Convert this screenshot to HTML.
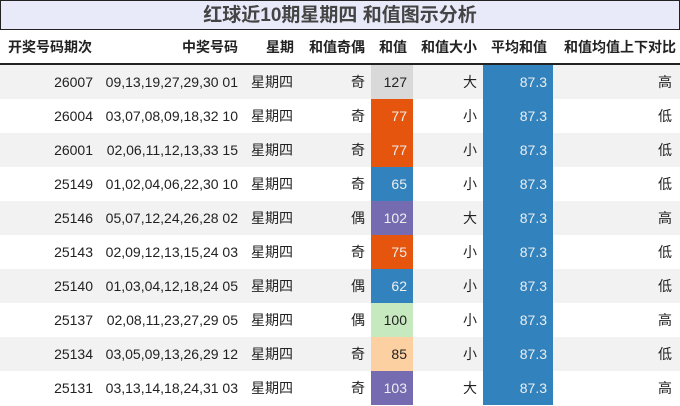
<!DOCTYPE html>
<html><head><meta charset="utf-8"><style>
body{margin:0;width:680px;height:406px;background:#fff;font-family:"Liberation Sans","Noto Sans CJK SC",sans-serif;overflow:hidden}
.title{position:absolute;left:0;top:0;width:678px;height:28px;background:#e8eafa;border:1px solid #222;text-align:center;font-size:19px;font-weight:bold;color:#444;line-height:29px}
table{position:absolute;left:0;top:30px;border-collapse:collapse;table-layout:fixed;width:680px;font-size:14px;color:#222}
th{height:33px;font-weight:bold;text-align:right;padding:0 6px 0 0;border-bottom:2px solid #222;white-space:nowrap}
th:first-child{text-align:left;padding-left:8px}
th:last-child{padding-right:4px}
td{height:34px;padding:0 6px 0 0;text-align:right;white-space:nowrap}
td:first-child{padding-right:8px}
td:last-child{padding-right:8px}
tr:nth-child(odd) td{background:#f2f2f2}
td.c3{text-align:center;padding:0}
tr td.b{background:#3182bd;color:#eee}
tr td.o{background:#e6550d;color:#eee}
tr td.p{background:#756bb1;color:#eee}
tr td.g{background:#d9d9d9}
tr td.lg{background:#c7e9c0}
tr td.pe{background:#fdd0a2}
</style></head><body>
<div class="title">红球近10期星期四 和值图示分析</div>
<table>
<colgroup><col style="width:101px"><col style="width:143px"><col style="width:56px"><col style="width:71px"><col style="width:42px"><col style="width:70px"><col style="width:70px"><col style="width:127px"></colgroup>
<thead><tr><th>开奖号码期次</th><th>中奖号码</th><th>星期</th><th>和值奇偶</th><th>和值</th><th>和值大小</th><th>平均和值</th><th>和值均值上下对比</th></tr></thead>
<tbody>
<tr><td>26007</td><td>09,13,19,27,29,30 01</td><td class="c3">星期四</td><td>奇</td><td class="g">127</td><td>大</td><td class="b">87.3</td><td>高</td></tr>
<tr><td>26004</td><td>03,07,08,09,18,32 10</td><td class="c3">星期四</td><td>奇</td><td class="o">77</td><td>小</td><td class="b">87.3</td><td>低</td></tr>
<tr><td>26001</td><td>02,06,11,12,13,33 15</td><td class="c3">星期四</td><td>奇</td><td class="o">77</td><td>小</td><td class="b">87.3</td><td>低</td></tr>
<tr><td>25149</td><td>01,02,04,06,22,30 10</td><td class="c3">星期四</td><td>奇</td><td class="b">65</td><td>小</td><td class="b">87.3</td><td>低</td></tr>
<tr><td>25146</td><td>05,07,12,24,26,28 02</td><td class="c3">星期四</td><td>偶</td><td class="p">102</td><td>大</td><td class="b">87.3</td><td>高</td></tr>
<tr><td>25143</td><td>02,09,12,13,15,24 03</td><td class="c3">星期四</td><td>奇</td><td class="o">75</td><td>小</td><td class="b">87.3</td><td>低</td></tr>
<tr><td>25140</td><td>01,03,04,12,18,24 05</td><td class="c3">星期四</td><td>偶</td><td class="b">62</td><td>小</td><td class="b">87.3</td><td>低</td></tr>
<tr><td>25137</td><td>02,08,11,23,27,29 05</td><td class="c3">星期四</td><td>偶</td><td class="lg">100</td><td>小</td><td class="b">87.3</td><td>高</td></tr>
<tr><td>25134</td><td>03,05,09,13,26,29 12</td><td class="c3">星期四</td><td>奇</td><td class="pe">85</td><td>小</td><td class="b">87.3</td><td>低</td></tr>
<tr><td>25131</td><td>03,13,14,18,24,31 03</td><td class="c3">星期四</td><td>奇</td><td class="p">103</td><td>大</td><td class="b">87.3</td><td>高</td></tr>
</tbody></table>
</body></html>
